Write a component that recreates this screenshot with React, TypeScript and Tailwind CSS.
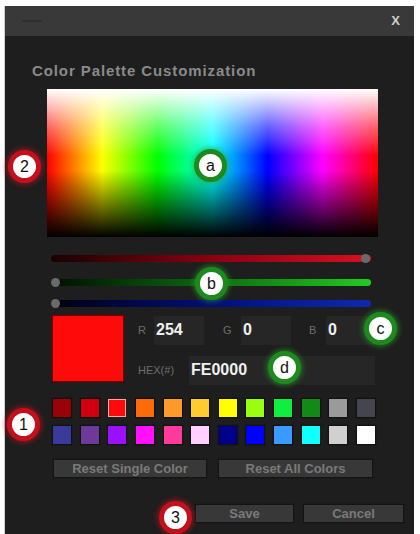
import type { ReactNode } from "react";

const row1 = ["#9a0008", "#d0000f", "#ff0a0a", "#ff6a0a", "#ff9a2a", "#ffcc30", "#ffff00", "#99ff10", "#10ee40", "#128a18", "#9a9a9a", "#45454e"];
const row2 = ["#3a3a9a", "#6e3a9a", "#9a10ff", "#ff10ff", "#ff3a9a", "#ffd0ff", "#00008a", "#0000ff", "#3a9aff", "#10ffff", "#d0d0d0", "#ffffff"];

function Badge({ label, color, className }: { label: string; color: "red" | "green"; className: string }) {
  const ring =
    color === "red"
      ? "border-[#c4101c] shadow-[0_0_5px_2px_rgba(200,20,30,0.55)]"
      : "border-[#1e8a1e] shadow-[0_0_5px_2px_rgba(40,160,40,0.55)]";
  return (
    <div
      className={`absolute flex h-[33px] w-[33px] items-center justify-center rounded-full border-[5px] bg-white text-[16px] leading-none text-[#111] ${ring} ${className}`}
      style={{ fontFamily: '"Liberation Sans", Arial, sans-serif' }}
    >
      {label}
    </div>
  );
}

function Slider({ track, knobLeft, className }: { track: string; knobLeft: boolean; className: string }) {
  return (
    <div className={`relative ml-[46px] h-[7px] w-[320px] ${className}`}>
      <div className={`h-full w-full rounded-full ${track}`} />
      <div
        className={`absolute top-[-1px] h-[9px] w-[9px] rounded-full bg-[#6a6a6a] ${knobLeft ? "left-0" : "right-[1px]"}`}
      />
    </div>
  );
}

function Field({ label, children, labelW, boxW }: { label: string; children?: ReactNode; labelW: string; boxW: string }) {
  return (
    <div className="flex items-start">
      <span className={`${labelW} pt-[9px] text-[11px] leading-none text-[#6e6e6e]`}>{label}</span>
      <div className={`${boxW} h-[29px] bg-[#262626] px-[2px] pt-[6px] text-[16px] font-bold leading-none text-[#f0f0f0]`}>
        {children}
      </div>
    </div>
  );
}

function Btn({ children, className }: { children: ReactNode; className: string }) {
  return (
    <div
      className={`flex h-[17px] items-center justify-center bg-[#383838] text-[13px] font-bold text-[#7a7a7a] shadow-[0_0_1px_1px_#141414] ${className}`}
    >
      {children}
    </div>
  );
}

export default function App() {
  return (
    <div
      className="relative h-[534px] w-[420px] overflow-hidden bg-white pl-[4px] pr-[6px] pt-[6px]"
      style={{ fontFamily: '"Liberation Sans", Arial, sans-serif' }}
    >
      <div className="h-full w-full border-l border-[#cfcfcf] bg-[#1e1e1e]">
        {/* title bar */}
        <div className="flex h-[30px] items-center justify-between bg-[#393939] pl-[17px] pr-[14px]">
          <div className="h-[2px] w-[20px] bg-[#2e2e2e]" />
          <span className="text-[13px] font-bold text-[#cfcfcf]">X</span>
        </div>

        {/* body */}
        <div className="pt-[27px]">
          <div className="ml-[27px] text-[15px] font-bold leading-[16px] tracking-[0.9px] text-[#8a8a8a]">
            Color Palette Customization
          </div>

          {/* spectrum */}
          <div className="relative ml-[42px] mt-[10px] h-[148px] w-[331px] bg-[linear-gradient(to_right,#ff0000,#ffff00,#00ff00,#00ffff,#0000ff,#ff00ff,#ff0000)]">
            <div className="absolute inset-0 bg-[linear-gradient(to_bottom,rgba(255,255,255,1)_0%,rgba(255,255,255,0.4)_25%,rgba(255,255,255,0)_45%,rgba(0,0,0,0)_55%,rgba(0,0,0,1)_100%)]" />
          </div>

          {/* sliders */}
          <Slider className="mt-[18px]" knobLeft={false} track="bg-[linear-gradient(to_right,#1a0000,#8a0010_50%,#d81020)]" />
          <Slider className="mt-[17px]" knobLeft track="bg-[linear-gradient(to_right,#001000,#0c6a10_50%,#22cc22)]" />
          <Slider className="mt-[14px]" knobLeft track="bg-[linear-gradient(to_right,#000010,#00107a_50%,#1028b0)]" />

          {/* current colour + values */}
          <div className="ml-[48px] mt-[9px] flex">
            <div className="h-[65px] w-[70px] bg-[#ff0a0a] shadow-[0_0_1px_1px_#7a0000]" />
            <div className="ml-[15px] flex flex-col">
              <div className="flex">
                <Field label="R" labelW="w-[16px]" boxW="w-[50px]">254</Field>
                <div className="ml-[19px]">
                  <Field label="G" labelW="w-[18px]" boxW="w-[50px]">0</Field>
                </div>
                <div className="ml-[18px]">
                  <Field label="B" labelW="w-[17px]" boxW="w-[50px]">0</Field>
                </div>
              </div>
              <div className="mt-[11px]">
                <Field label="HEX(#)" labelW="w-[51px]" boxW="w-[186px]">FE0000</Field>
              </div>
            </div>
          </div>

          {/* palette */}
          <div className="ml-[48px] mt-[14px] grid w-[322px] grid-cols-12 gap-x-[9.6px] gap-y-[9px]">
            {row1.map((c, i) => (
              <div
                key={"a" + i}
                className={`h-[18px] w-[18px] ${i === 2 ? "border border-[#f0a8a0]" : "shadow-[0_0_1px_1px_#111]"}`}
                style={{ backgroundColor: c }}
              />
            ))}
            {row2.map((c, i) => (
              <div
                key={"b" + i}
                className="h-[18px] w-[18px] shadow-[0_0_1px_1px_#111]"
                style={{ backgroundColor: c }}
              />
            ))}
          </div>

          <div className="ml-[49px] mt-[16px] flex gap-[13px]">
            <Btn className="w-[152px]">Reset Single Color</Btn>
            <Btn className="w-[153px]">Reset All Colors</Btn>
          </div>

          <div className="ml-[191px] mt-[28px] flex gap-[11px]">
            <Btn className="w-[97px]">Save</Btn>
            <Btn className="w-[99px]">Cancel</Btn>
          </div>
        </div>
      </div>

      {/* callouts */}
      <Badge label="2" color="red" className="left-[8px] top-[150px]" />
      <Badge label="a" color="green" className="left-[194px] top-[149px]" />
      <Badge label="b" color="green" className="left-[195px] top-[267px]" />
      <Badge label="c" color="green" className="left-[364px] top-[312px]" />
      <Badge label="d" color="green" className="left-[268px] top-[351px]" />
      <Badge label="1" color="red" className="left-[7px] top-[408px]" />
      <Badge label="3" color="red" className="left-[159px] top-[501px]" />
    </div>
  );
}
